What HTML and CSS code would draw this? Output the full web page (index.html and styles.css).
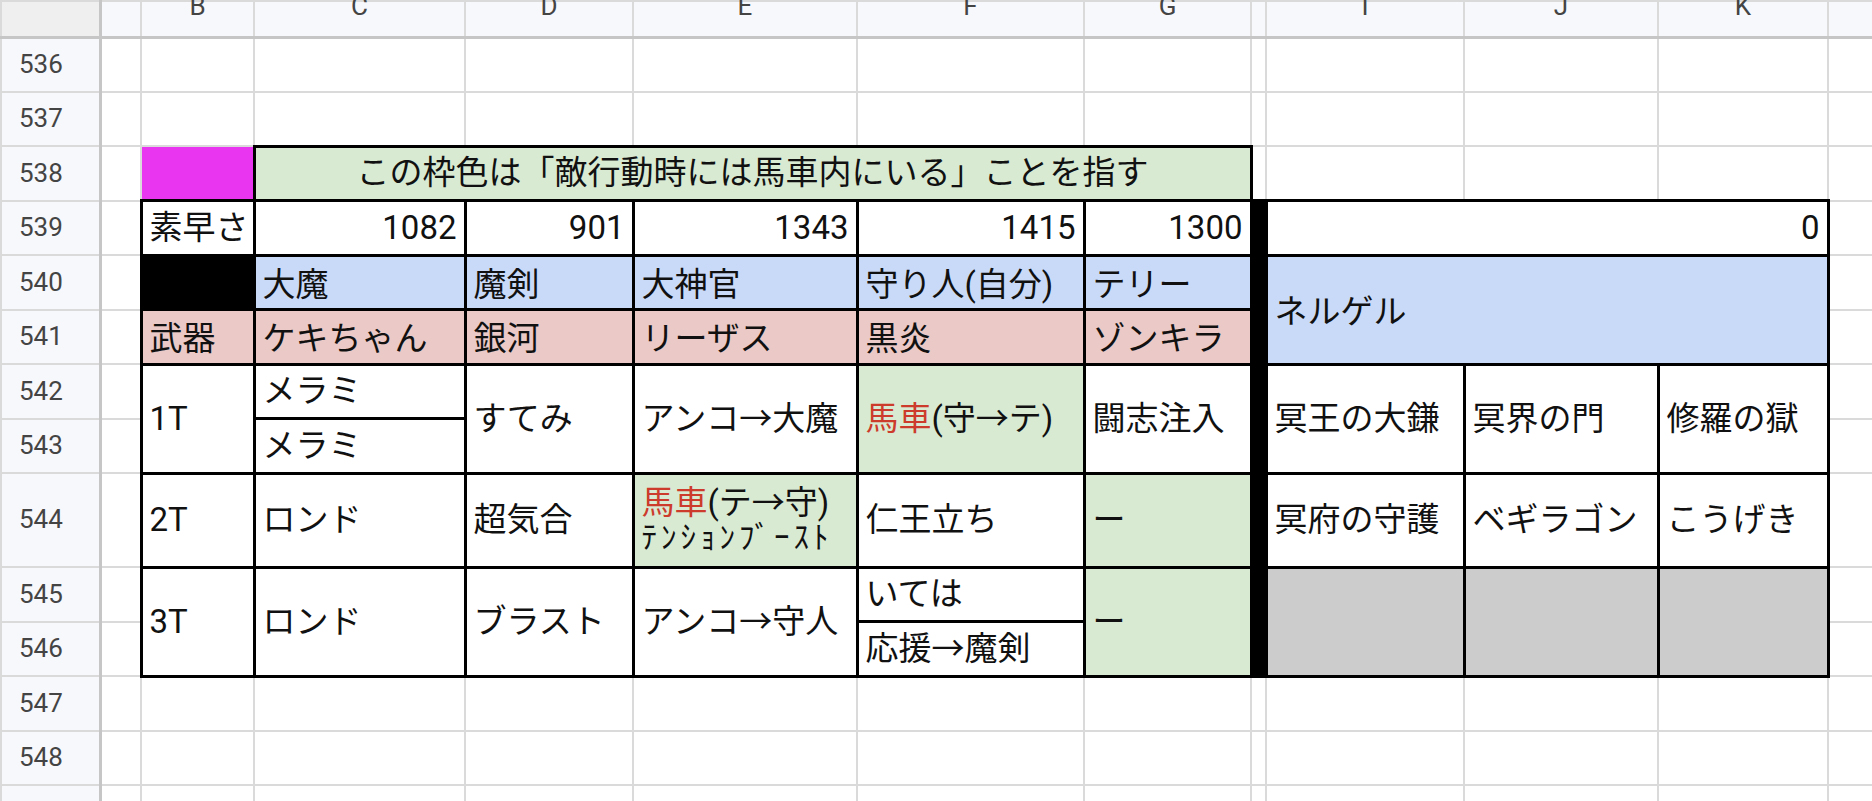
FILE: index.html
```html
<!DOCTYPE html>
<html lang="ja">
<head>
  <meta charset="utf-8" />
  <meta name="viewport" content="width=device-width, initial-scale=1" />
  <title>行動表 – 536〜549</title>
  <link rel="stylesheet" href="styles.css">
</head>
<body>
  <table class="sheet">
    <colgroup>
      <col class="w-rh"><col class="w-a"><col class="w-b"><col class="w-c"><col class="w-d"><col class="w-e"><col class="w-f">
      <col class="w-g"><col class="w-h"><col class="w-i"><col class="w-j"><col class="w-k"><col class="w-l">
    </colgroup>

    <!-- column letters (top half cut off by the viewport) -->
    <tr class="colheads">
      <th class="corner"></th>
      <th></th>
      <th><span>B</span></th>
      <th><span>C</span></th>
      <th><span>D</span></th>
      <th><span>E</span></th>
      <th><span>F</span></th>
      <th><span>G</span></th>
      <th></th>
      <th><span>I</span></th>
      <th><span>J</span></th>
      <th><span>K</span></th>
      <th></th>
    </tr>

    <tr>
      <th class="rownum">536</th>
      <td></td><td></td><td></td><td></td><td></td><td></td><td></td><td></td><td></td><td></td><td></td><td></td>
    </tr>
    <tr>
      <th class="rownum">537</th>
      <td></td><td></td><td></td><td></td><td></td><td></td><td></td><td></td><td></td><td></td><td></td><td></td>
    </tr>

    <!-- legend row -->
    <tr>
      <th class="rownum">538</th>
      <td></td>
      <td class="magenta"></td>
      <td class="box green note" colspan="5">この枠色は「敵行動時には馬車内にいる」ことを指す</td>
      <td></td><td></td><td></td><td></td><td></td>
    </tr>

    <!-- speed -->
    <tr>
      <th class="rownum">539</th>
      <td></td>
      <td class="box">素早さ</td>
      <td class="box num">1082</td>
      <td class="box num">901</td>
      <td class="box num">1343</td>
      <td class="box num">1415</td>
      <td class="box num">1300</td>
      <td class="box black" rowspan="8"></td>
      <td class="box num" colspan="3">0</td>
      <td></td>
    </tr>

    <!-- party / enemy names -->
    <tr>
      <th class="rownum">540</th>
      <td></td>
      <td class="box black"></td>
      <td class="box blue">大魔</td>
      <td class="box blue">魔剣</td>
      <td class="box blue">大神官</td>
      <td class="box blue">守り人(自分)</td>
      <td class="box blue">テリー</td>
      <td class="box blue" colspan="3" rowspan="2">ネルゲル</td>
      <td></td>
    </tr>

    <!-- weapons -->
    <tr>
      <th class="rownum">541</th>
      <td></td>
      <td class="box pink">武器</td>
      <td class="box pink">ケキちゃん</td>
      <td class="box pink">銀河</td>
      <td class="box pink">リーザス</td>
      <td class="box pink">黒炎</td>
      <td class="box pink">ゾンキラ</td>
      <td></td>
    </tr>

    <!-- turn 1 -->
    <tr>
      <th class="rownum">542</th>
      <td></td>
      <td class="box" rowspan="2">1T</td>
      <td class="box">メラミ</td>
      <td class="box" rowspan="2">すてみ</td>
      <td class="box" rowspan="2">アンコ→大魔</td>
      <td class="box green" rowspan="2"><span class="red">馬車</span>(守→テ)</td>
      <td class="box" rowspan="2">闘志注入</td>
      <td class="box" rowspan="2">冥王の大鎌</td>
      <td class="box" rowspan="2">冥界の門</td>
      <td class="box" rowspan="2">修羅の獄</td>
      <td></td>
    </tr>
    <tr>
      <th class="rownum">543</th>
      <td></td>
      <td class="box">メラミ</td>
      <td></td>
    </tr>

    <!-- turn 2 -->
    <tr class="tall">
      <th class="rownum">544</th>
      <td></td>
      <td class="box">2T</td>
      <td class="box">ロンド</td>
      <td class="box">超気合</td>
      <td class="box green stack">
        <span class="line"><span class="red">馬車</span>(テ→守)</span>
        <span class="line small">ﾃﾝｼｮﾝﾌﾞｰｽﾄ</span>
      </td>
      <td class="box">仁王立ち</td>
      <td class="box green">ー</td>
      <td class="box">冥府の守護</td>
      <td class="box">ベギラゴン</td>
      <td class="box">こうげき</td>
      <td></td>
    </tr>

    <!-- turn 3 -->
    <tr>
      <th class="rownum">545</th>
      <td></td>
      <td class="box" rowspan="2">3T</td>
      <td class="box" rowspan="2">ロンド</td>
      <td class="box" rowspan="2">ブラスト</td>
      <td class="box" rowspan="2">アンコ→守人</td>
      <td class="box">いては</td>
      <td class="box green" rowspan="2">ー</td>
      <td class="box grey" rowspan="2"></td>
      <td class="box grey" rowspan="2"></td>
      <td class="box grey" rowspan="2"></td>
      <td></td>
    </tr>
    <tr>
      <th class="rownum">546</th>
      <td></td>
      <td class="box">応援→魔剣</td>
      <td></td>
    </tr>

    <tr>
      <th class="rownum">547</th>
      <td></td><td></td><td></td><td></td><td></td><td></td><td></td><td></td><td></td><td></td><td></td><td></td>
    </tr>
    <tr>
      <th class="rownum">548</th>
      <td></td><td></td><td></td><td></td><td></td><td></td><td></td><td></td><td></td><td></td><td></td><td></td>
    </tr>
    <tr>
      <th class="rownum">549</th>
      <td></td><td></td><td></td><td></td><td></td><td></td><td></td><td></td><td></td><td></td><td></td><td></td>
    </tr>
  </table>
</body>
</html>
```

FILE: styles.css
```css
/* spreadsheet view – rows 536 to 549 */
*,*::before,*::after{box-sizing:border-box;margin:0;padding:0;}

:root{
  --grid:#dadada;
  --head-line:#c6c6c6;
  --head-bg:#f7f8fb;
  --ink:#111;

  --c-green:#d9ead3;
  --c-blue:#c9daf8;
  --c-pink:#ebc9c6;
  --c-grey:#cccccc;
  --c-magenta:#e935f0;
  --c-red:#cc3b2b;
}

html,body{background:#fff;overflow:hidden;}
body{
  font-family:Roboto,"Noto Sans CJK JP",sans-serif;
  color:var(--ink);
}

/* === table skeleton === */
.sheet{
  border-collapse:collapse;
  table-layout:fixed;
  width:1927px;
}
.w-rh{width:99px;}
.w-a{width:41px;}
.w-b{width:113px;}
.w-c{width:211px;}
.w-d{width:168px;}
.w-e{width:224px;}
.w-f{width:227px;}
.w-g{width:167px;}
.w-h{width:15px;}
.w-i{width:198px;}
.w-j{width:194px;}
.w-k{width:170px;}
.w-l{width:100px;}

.sheet tr{height:54.5px;}
.sheet tr.tall{height:94px;}

.sheet td,
.sheet th{
  border:2px solid var(--grid);
  padding:0 7px;
  font-weight:400;
  font-size:33px;
  line-height:1.2;
  text-align:left;
  vertical-align:middle;
  white-space:nowrap;
  overflow:hidden;
}

/* === headers === */
.sheet tr.colheads{height:36px;}
.colheads th{
  background:var(--head-bg);
  border-bottom:3px solid var(--head-line);
  font-size:26px;
  line-height:26px;
  color:#444;
  text-align:center;
  vertical-align:top;
  overflow:visible;
}
.colheads th span{display:block;margin-top:-9px;}
.colheads th.corner{background:#efefef;border-right:3px solid var(--head-line);}

.rownum{
  background:var(--head-bg);
  border-right:3px solid var(--head-line) !important;
  color:#444;
  font-size:26px !important;
  padding-left:17px !important;
}

/* === cells === */
.sheet td.box{border:3px solid #000;}
.num{text-align:right !important;}
.note{text-align:center !important;}

.green{background:var(--c-green);}
.blue{background:var(--c-blue);}
.pink{background:var(--c-pink);}
.grey{background:var(--c-grey);}
.black{background:#000;}
.magenta{background:var(--c-magenta);}
.red{color:var(--c-red);}

.blue,.pink{padding-top:5px !important;}

.stack .line{display:block;}
.stack .line:first-child{line-height:36px;}
.stack .small{
  font-size:31px;
  line-height:34px;
  letter-spacing:4px;
}
```
